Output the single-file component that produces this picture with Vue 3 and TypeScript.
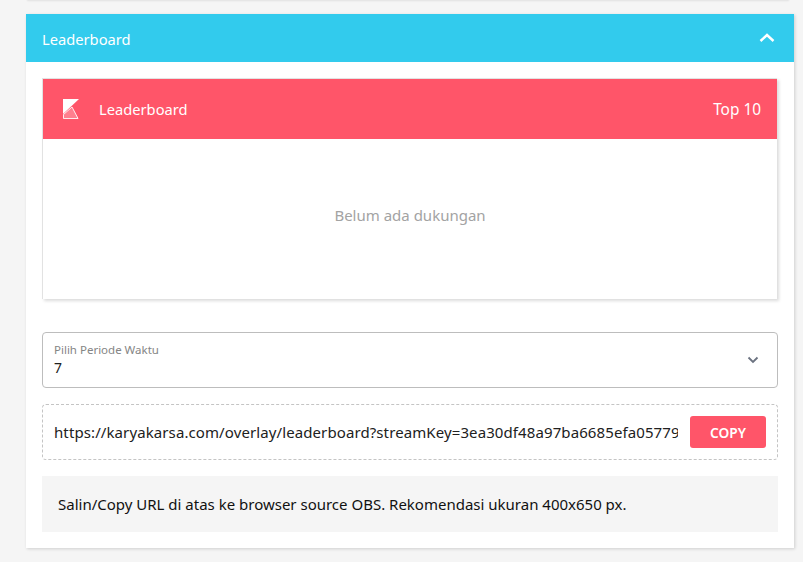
<script setup lang="ts">
import { ref } from 'vue';

const period = ref('7');
const overlayUrl = 'https://karyakarsa.com/overlay/leaderboard?streamKey=3ea30df48a97ba6685efa05779c1d2b4';
</script>

<template>
  <div class="page">
    <div class="prev-card"></div>
    <section class="card">
      <header class="card-head">
        <span class="head-title">Leaderboard</span>
        <svg class="chevron-up" width="16" height="10" viewBox="0 0 16 10">
          <path d="M1.5 8 L8 2 L14.5 8" fill="none" stroke="#fff" stroke-width="2.4" />
        </svg>
      </header>
      <div class="card-body">
        <div class="board">
          <div class="board-head">
            <div class="board-title">
              <svg class="logo" width="16" height="20" viewBox="0 0 16 20">
                <path d="M0 0 H16 L0 15 Z" fill="#fff" />
                <path d="M0 15.5 L9 7.5 L15.5 19.5 H0 Z" fill="#fff" fill-opacity="0.25" />
                <path d="M0.5 19.5 H15 L9 8 L0.5 15.5 Z" fill="none" stroke="#fff" stroke-opacity="0.85" />
              </svg>
              <span class="board-name">Leaderboard</span>
            </div>
            <span class="top-count">Top 10</span>
          </div>
          <div class="board-empty">Belum ada dukungan</div>
        </div>

        <div class="select-box">
          <div class="select-text">
            <label class="select-label">Pilih Periode Waktu</label>
            <div class="select-value">{{ period }}</div>
          </div>
          <svg class="chevron-down" width="12" height="8" viewBox="0 0 12 8">
            <path d="M1.5 1.5 L6 6 L10.5 1.5" fill="none" stroke="#6b7280" stroke-width="1.8" />
          </svg>
        </div>

        <div class="url-box">
          <input class="url-input" :value="overlayUrl" readonly />
          <button class="copy-btn" type="button">COPY</button>
        </div>

        <div class="note">Salin/Copy URL di atas ke browser source OBS. Rekomendasi ukuran 400x650 px.</div>
      </div>
    </section>
  </div>
</template>

<style>
html, body {
  margin: 0;
  background: #f5f5f5;
}
</style>

<style scoped>
.page {
  width: 803px;
  height: 562px;
  box-sizing: border-box;
  overflow: hidden;
  padding-left: 26px;
  font-family: "Noto Sans", "Open Sans", sans-serif;
  font-size: 15px;
  background: #f5f5f5;
}

/* bottom edge of the card above, scrolled almost out of view */
.prev-card {
  height: 0;
  margin-left: 2px;
  width: 760px;
  box-shadow: 0 0 2px 1px rgba(0, 0, 0, 0.09);
}

.card {
  width: 768px;
  margin-top: 14px;
  background: #fff;
  box-shadow: 1px 1px 3px rgba(0, 0, 0, 0.16);
}

.card-head {
  height: 48px;
  padding: 0 19px 0 16px;
  display: flex;
  align-items: center;
  justify-content: space-between;
  background: #32cbed;
  color: #fff;
}

.head-title {
  padding-top: 2px;
  font-size: 14.7px;
}

.card-body {
  padding: 16px;
  display: flex;
  flex-direction: column;
}

.board {
  margin-right: 1px;
  background: #fff;
  border-top: 1px solid #e2e2e2;
  border-left: 1px solid #e2e2e2;
  box-shadow: 2px 2px 3px rgba(0, 0, 0, 0.14);
}

.board-head {
  height: 60px;
  padding: 0 16px 0 20px;
  display: flex;
  align-items: center;
  justify-content: space-between;
  background: #ff5569;
  color: #fff;
}

.board-title {
  display: flex;
  align-items: center;
  gap: 20px;
}

.board-name {
  font-size: 14.7px;
}

.top-count {
  font-size: 15.4px;
}

.board-empty {
  height: 160px;
  padding-bottom: 8px;
  box-sizing: border-box;
  display: flex;
  align-items: center;
  justify-content: center;
  color: #a3a3a3;
}

.select-box {
  height: 56px;
  margin-top: 33px;
  padding: 0 18px 0 11px;
  box-sizing: border-box;
  display: flex;
  align-items: center;
  justify-content: space-between;
  border: 1px solid #bdbdbd;
  border-radius: 4px;
}

.select-label {
  display: block;
  font-size: 11.5px;
  line-height: 14px;
  color: #858585;
}

.select-value {
  padding-top: 1px;
  font-size: 14px;
  line-height: 20px;
  color: #212121;
}

.url-box {
  height: 56px;
  margin-top: 16px;
  padding: 0 11px;
  box-sizing: border-box;
  display: flex;
  align-items: center;
  gap: 12px;
  border: 1px dashed #c4c4c4;
  border-radius: 4px;
}

.url-input {
  flex: 1;
  min-width: 0;
  padding: 0;
  border: none;
  outline: none;
  background: transparent;
  font: inherit;
  letter-spacing: 0.1px;
  color: #212121;
}

.copy-btn {
  width: 76px;
  height: 32px;
  flex: none;
  border: none;
  border-radius: 3px;
  background: #ff5569;
  color: #fff;
  font-family: inherit;
  font-size: 13.7px;
  font-weight: 600;
}

.note {
  height: 56px;
  margin-top: 16px;
  padding: 0 16px;
  display: flex;
  align-items: center;
  background: #f5f5f5;
  color: #111;
}
</style>
